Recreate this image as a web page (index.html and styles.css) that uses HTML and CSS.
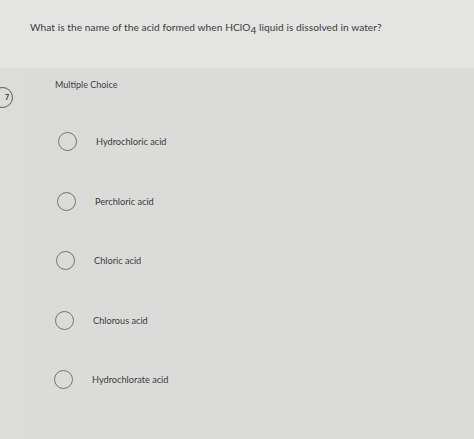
FILE: index.html
```html
<!DOCTYPE html>
<html>
<head>
<meta charset="utf-8">
<link rel="stylesheet" href="styles.css">
</head>
<body>
<div class="page">
  <div class="question">What is the name of the acid formed when HClO<sub>4</sub> liquid is dissolved in water?</div>
  <div class="lower">
    <div class="gutter"><span class="qnum">7</span></div>
    <div class="panel">
      <div class="kind">Multiple Choice</div>
      <div class="options">
        <div class="option o1"><span class="radio"></span><span class="label">Hydrochloric acid</span></div>
        <div class="option o2"><span class="radio"></span><span class="label">Perchloric acid</span></div>
        <div class="option o3"><span class="radio"></span><span class="label">Chloric acid</span></div>
        <div class="option o4"><span class="radio"></span><span class="label">Chlorous acid</span></div>
        <div class="option o5"><span class="radio"></span><span class="label">Hydrochlorate acid</span></div>
      </div>
    </div>
  </div>
</div>
</body>
</html>
```
FILE: styles.css
```css
html, body {
  margin: 0;
  padding: 0;
  width: 474px;
  height: 439px;
  overflow: hidden;
  background: #dddedc;
}
.page {
  width: 474px;
  height: 439px;
  display: flex;
  flex-direction: column;
  font-family: Lato, "Noto Sans", sans-serif;
  color: #3a3b3b;
}
.question {
  height: 68px;
  box-sizing: border-box;
  padding: 21px 0 0 30px;
  font-size: 10.2px;
  background: #e4e5e3;
  letter-spacing: 0.05px;
}
.question sub {
  font-size: 10.2px;
  vertical-align: -3px;
  line-height: 0;
}
.lower {
  flex: 1;
  display: flex;
}
.gutter {
  width: 28px;
  background: #dcdddb;
  position: relative;
}
.qnum {
  position: absolute;
  left: -8px;
  top: 19px;
  width: 19px;
  height: 19px;
  border: 1px solid #555;
  border-radius: 50%;
  font-size: 7px;
  font-weight: bold;
  line-height: 19px;
  text-align: center;
  text-indent: 9px;
  color: #333;
}
.panel {
  flex: 1;
  background: #dbdcda;
  padding: 11px 0 0 27px;
}
.kind {
  font-size: 9px;
  color: #3c3d3d;
}
.options {
  margin-top: 42px;
  display: flex;
  flex-direction: column;
}
.option {
  height: 59.5px;
  display: flex;
  align-items: flex-start;
  box-sizing: border-box;
}
.radio {
  width: 17px;
  height: 17px;
  border: 1.2px solid #737473;
  border-radius: 50%;
  margin-left: 3px;
  flex: none;
}
.label {
  margin-left: 19px;
  font-size: 9.2px;
  line-height: 19px;
  color: #3a3b3b;
}
.o2 { margin-left: -1px; }
.o3 { margin-left: -2px; }
.o4 { margin-left: -3px; }
.o5 { margin-left: -4px; }
```
